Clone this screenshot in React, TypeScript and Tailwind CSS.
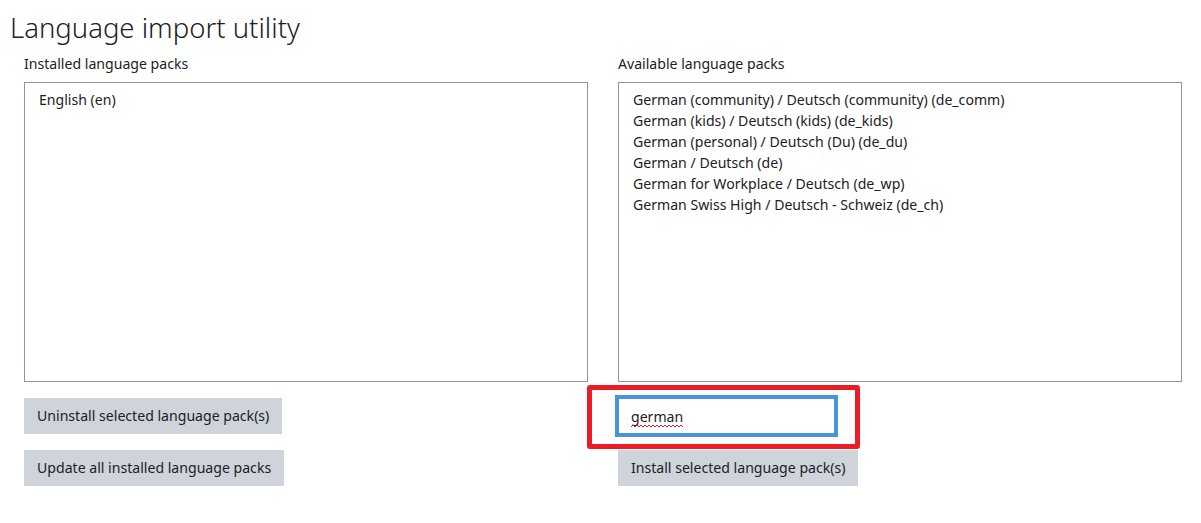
const installed = ['English (en)'];

const available = [
  'German (community) / Deutsch (community) (de_comm)',
  'German (kids) / Deutsch (kids) (de_kids)',
  'German (personal) / Deutsch (Du) (de_du)',
  'German / Deutsch (de)',
  'German for Workplace / Deutsch (de_wp)',
  'German Swiss High / Deutsch - Schweiz (de_ch)',
];

function PackList({ items }: { items: string[] }) {
  return (
    <div className="h-[300px] border border-[#8f959e] bg-white px-[14px] pb-[7px] pt-[6px]">
      {items.map((item) => (
        <div key={item} className="leading-[21px]">
          {item}
        </div>
      ))}
    </div>
  );
}

function Button({ children }: { children: string }) {
  return (
    <button className="h-[36px] bg-[#ced4da] px-[13px] text-left leading-[36px] text-[#1d2125]">
      {children}
    </button>
  );
}

export default function App() {
  return (
    <div
      className="min-h-screen bg-white text-[14.1px] text-[#1d2125]"
      style={{ fontFamily: '"Noto Sans", "Open Sans", sans-serif' }}
    >
      <h2 className="pl-[10px] pt-[8px] text-[27.5px] font-light leading-[40px] text-[#1d2125]">
        Language import utility
      </h2>
      <div className="grid grid-cols-[564px_564px] gap-[30px] pl-[24px] pt-[4px]">
        <div className="flex flex-col">
          <label className="mb-[6px] leading-[24px]">Installed language packs</label>
          <PackList items={installed} />
          <div className="mt-[16px] flex flex-col items-start gap-[16px]">
            <Button>Uninstall selected language pack(s)</Button>
            <Button>Update all installed language packs</Button>
          </div>
        </div>
        <div className="flex flex-col">
          <label className="mb-[6px] leading-[24px]">Available language packs</label>
          <PackList items={available} />
          <div className="mt-[16px] flex flex-col items-start gap-[16px]">
            <div className="relative">
              <input
                defaultValue="german"
                className="h-[36px] w-[217px] border border-[#4a93dd] bg-white px-[12px] text-[14.1px] text-[#1d2125] outline-none ring-[3px] ring-[#4a93dd]"
              />
              {/* spellcheck squiggle */}
              <svg
                className="pointer-events-none absolute left-[13px] top-[26px]"
                width="52"
                height="4"
                viewBox="0 0 52 4"
              >
                <path
                  d="M0 3 L2 1 L4 3 L6 1 L8 3 L10 1 L12 3 L14 1 L16 3 L18 1 L20 3 L22 1 L24 3 L26 1 L28 3 L30 1 L32 3 L34 1 L36 3 L38 1 L40 3 L42 1 L44 3 L46 1 L48 3 L50 1 L52 3"
                  fill="none"
                  stroke="#e02020"
                  strokeWidth="1"
                />
              </svg>
              <div className="pointer-events-none absolute -bottom-[15px] -left-[31px] -right-[25px] -top-[13px] rounded-[3px] border-[5px] border-[#ed1c24]" />
            </div>
            <Button>Install selected language pack(s)</Button>
          </div>
        </div>
      </div>
    </div>
  );
}
